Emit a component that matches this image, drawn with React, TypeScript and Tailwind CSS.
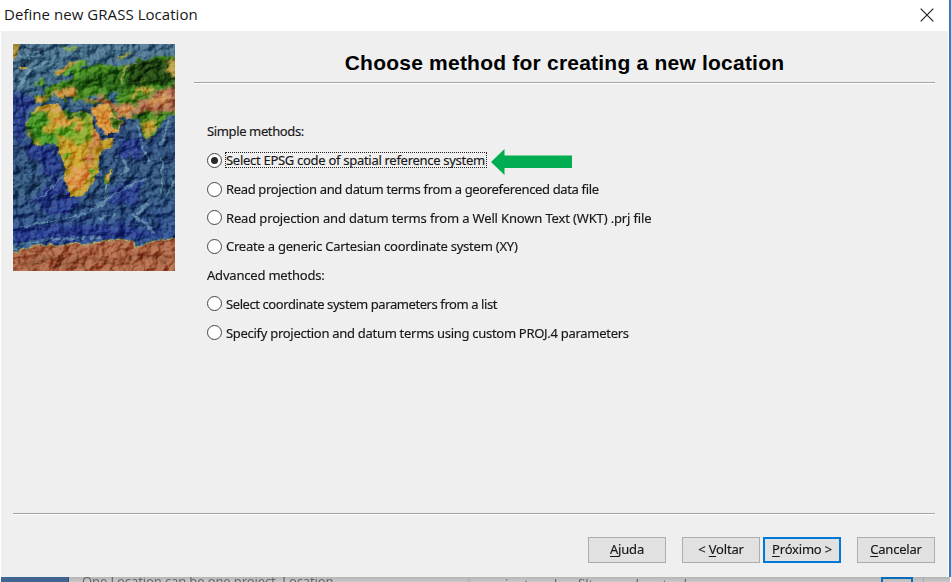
import React from 'react';

type Method = { label: string; selected?: boolean; track: string };

const SIMPLE: Method[] = [
  { label: 'Select EPSG code of spatial reference system', selected: true, track: 'tracking-[-0.29px]' },
  { label: 'Read projection and datum terms from a georeferenced data file', track: 'tracking-[-0.35px]' },
  { label: 'Read projection and datum terms from a Well Known Text (WKT) .prj file', track: 'tracking-[-0.15px]' },
  { label: 'Create a generic Cartesian coordinate system (XY)', track: 'tracking-[-0.23px]' },
];

const ADVANCED: Method[] = [
  { label: 'Select coordinate system parameters from a list', track: 'tracking-[-0.42px]' },
  { label: 'Specify projection and datum terms using custom PROJ.4 parameters', track: 'tracking-[-0.29px]' },
];

function WorldMap() {
  return (
    <svg className="block h-[227px] w-[162px] shrink-0" viewBox="39 27 485 681" preserveAspectRatio="none">
      <defs>
        <linearGradient id="sea" x1="0" y1="0" x2="0" y2="1">
          <stop offset="0" stopColor="#4d7590" />
          <stop offset="0.22" stopColor="#416a88" />
          <stop offset="0.4" stopColor="#31517f" />
          <stop offset="0.65" stopColor="#33587f" />
          <stop offset="0.85" stopColor="#2c4c8c" />
          <stop offset="1" stopColor="#4a86a0" />
        </linearGradient>
        <filter id="relief" x="0" y="0" width="100%" height="100%" colorInterpolationFilters="sRGB">
          <feTurbulence type="fractalNoise" baseFrequency="0.03 0.035" numOctaves="4" seed="8" />
          <feColorMatrix values="0 0 0 0 0  0 0 0 0 0  0 0 0 0 0  1.2 0 0 0 -.1" />
          <feDiffuseLighting surfaceScale="16" diffuseConstant="0.68" lightingColor="#fff">
            <feDistantLight azimuth="215" elevation="48" />
          </feDiffuseLighting>
        </filter>
        <filter id="rough" x="-5%" y="-5%" width="110%" height="110%" colorInterpolationFilters="sRGB">
          <feTurbulence type="fractalNoise" baseFrequency="0.05" numOctaves="3" seed="3" />
          <feDisplacementMap in="SourceGraphic" scale="18" xChannelSelector="R" yChannelSelector="G" />
        </filter>
        <filter id="patches" x="-10%" y="-10%" width="120%" height="120%" colorInterpolationFilters="sRGB">
          <feTurbulence type="fractalNoise" baseFrequency="0.04" numOctaves="3" seed="11" />
          <feDisplacementMap in="SourceGraphic" scale="48" xChannelSelector="R" yChannelSelector="G" />
          <feGaussianBlur stdDeviation="3" />
        </filter>
        <clipPath id="africa">
          <path d="M110 212L150 208L177 207L188 226L215 230L240 225L270 234L276 256L291 290L306 313L346 308L330 332L294 366L298 392L294 412L275 445L262 470L240 484L215 488L201 462L190 430L196 400L184 370L177 350L180 338L150 325L110 333L87 305L77 280L82 255L96 230Z" />
        </clipPath>
        <clipPath id="eurasia">
          <path d="M107 207L105 181L135 180L130 165L155 148L180 142L215 132L232 104L252 102L282 88L340 88L370 94L402 86L408 68L430 78L470 64L540 60V240L502 242L482 265L460 300L440 318L427 290L418 255L390 250L350 247L328 230L312 207L275 205L250 204L248 193L235 188L228 207L210 186L190 178L204 202L188 197L168 178L148 184L138 200Z" />
        </clipPath>
      </defs>
      <rect x="39" y="27" width="485" height="681" fill="url(#sea)" />
      <g filter="url(#patches)" fill="#293b91" opacity=".8">
        <path d="M39 170L105 190L80 250L70 320L160 340L185 400L150 430L90 350L39 300Z" />
        <path d="M350 310L425 315L430 370L370 370Z" />
        <path d="M39 585L200 565L330 570L500 590L450 605L220 620L39 620Z" />
        <path d="M90 500L190 420L240 500L190 540Z" />
        <path d="M330 460L430 430L400 520L320 500Z" />
      </g>
      <g filter="url(#rough)" fill="none" stroke="#7aa9b9" strokeLinecap="round" opacity=".6">
        <path d="M132 82L85 110L52 158M108 70L60 62M160 70L112 96M39 136L70 128" strokeWidth="7" />
        <path d="M120 490L165 450L190 420M60 578L190 552L260 535L315 490L375 460L440 430" strokeWidth="5" />
        <path d="M366 365L380 400L355 430M318 450L315 500L290 520M485 365V475M520 440L500 480M415 270L425 330L445 375M505 260L480 330" strokeWidth="6" />
        <path d="M39 640L100 620L150 612L300 605M395 540L430 560L460 590M440 510L415 535M300 550L345 538" strokeWidth="9" />
      </g>
      <g filter="url(#rough)" fill="none" stroke="#15314b" strokeWidth="10" opacity=".7">
        <path d="M75 39L127 45L125 66L90 78L62 100L50 141" />
        <path d="M200 470L150 500M440 535L472 575M330 445L350 430" strokeWidth="5" />
      </g>
      <g filter="url(#rough)">
        <g clipPath="url(#eurasia)">
          <rect x="39" y="27" width="510" height="310" fill="#478c20" />
          <g filter="url(#patches)">
            <path d="M190 145L300 105L370 95L430 70L540 65V145L440 150L360 170L280 155L220 170Z" fill="#2d6a19" />
            <path d="M385 85L440 75L540 72V132L420 155L380 135Z" fill="#234a13" />
            <path d="M148 177L210 160L240 176L220 190L160 185Z" fill="#ce9442" />
            <path d="M107 183L140 187L130 207L105 204Z" fill="#cc983f" />
            <path d="M250 200L290 180L340 202L400 210L420 190L460 180L540 138V235L430 232L395 252L350 245L310 206Z" fill="#b17152" />
            <path d="M395 160L455 155L470 167L405 178Z" fill="#d2aa45" />
            <path d="M496 75L540 70V125L495 115Z" fill="#bd9e42" />
            <path d="M350 215L400 215L393 248L360 245ZM425 200L500 180L520 195L455 206Z" fill="#d49853" />
            <path d="M420 262L480 258L450 300L435 315Z" fill="#c3a337" />
            <path d="M405 235L450 240L430 260L410 257Z" fill="#29651a" />
          </g>
          <path d="M365 150L371 100L402 83" fill="none" stroke="#a8a44a" strokeWidth="5" />
          <path d="M322 168L350 165L349 190L355 205L334 207L324 190ZM256 184L285 180L302 190L276 194Z" fill="#44788e" />
        </g>
        <path d="M160 119L182 100L214 80L246 73L268 84L242 94L239 118L220 123L217 104L198 125L184 113L173 127Z" fill="#559d28" />
        <path d="M162 117L186 98L214 82L244 77L205 96L176 122Z" fill="#c9994f" />
        <path d="M346 75L366 58L402 52L375 64L361 75Z" fill="#98a044" />
        <path d="M120 123L130 131L133 150L118 154ZM105 139L117 139L114 151L104 151Z" fill="#54972e" />
        <path d="M25 20L62 20L54 58L38 80L25 82Z" fill="#ad913c" />
        <path d="M55 93L80 93L84 102L62 104Z" fill="#ccaa4c" />
        <path d="M185 38L238 32L227 43L205 49Z" fill="#729b49" />
        <path d="M275 216L320 208L339 240L372 262L352 287L311 302L294 270L276 240Z" fill="#db9c43" />
        <path d="M335 246L370 260L348 283L335 276Z" fill="#447c22" />
        <g clipPath="url(#africa)">
          <rect x="70" y="200" width="290" height="300" fill="#c2a22e" />
          <g filter="url(#patches)">
            <path d="M75 240L115 230L142 242L130 282L155 292L180 330L90 330Z" fill="#499927" />
            <path d="M80 270L95 285L104 315L82 310Z" fill="#1d531a" />
            <path d="M190 220L270 232L267 250L200 251Z" fill="#277123" />
            <path d="M180 275L208 268L240 291L212 322L165 295Z" fill="#6bac2b" />
            <path d="M98 230L180 210L190 226L135 240Z" fill="#d19b50" />
            <path d="M190 240L221 254L204 280L168 275L148 263Z" fill="#d7a044" />
            <path d="M223 265L250 265L257 286L227 285Z" fill="#cca14c" />
            <path d="M240 240L258 260L252 286L232 300L218 326L235 330L265 310L280 285L268 250Z" fill="#88aa2c" />
            <path d="M269 290L305 300L300 331L280 350L279 380L253 376L259 342L276 330Z" fill="#c67d4a" />
            <path d="M190 335L245 325L258 360L232 388L189 380Z" fill="#cfa42b" />
            <path d="M201 404L262 384L287 399L251 465L225 472L201 445Z" fill="#dd994c" />
            <path d="M272 410L298 390L285 438L268 445ZM185 360L220 352L215 370L190 375Z" fill="#5bae23" />
          </g>
        </g>
        <path d="M314 421L333 401L332 428L319 448L312 442Z" fill="#6ba52c" />
        <path d="M317 421L333 403L329 429L319 444Z" fill="#dc9643" />
        <path d="M15 652L66 645L103 632L164 630L275 626L350 612L403 618L408 638L440 622L482 614L550 611V735H15Z" fill="#ae6847" stroke="#b0b85e" strokeWidth="3" />
      </g>
      <g filter="url(#patches)" fill="none" stroke="#774126" strokeWidth="9" opacity=".65">
        <path d="M60 692L130 665L210 674L280 668L340 685M380 670L440 660L500 675M160 690L260 695" />
      </g>
      <rect x="39" y="27" width="485" height="681" filter="url(#relief)" className="mix-blend-soft-light" />
    </svg>
  );
}

function Radio({ method }: { method: Method }) {
  return (
    <label className="flex h-[28.7px] items-center">
      <span className="flex size-[15px] shrink-0 items-center justify-center rounded-full border-[1.4px] border-[#444] bg-white">
        {method.selected && <span className="size-[7.5px] rounded-full bg-[#292929]" />}
      </span>
      <span className={`ml-[3px] whitespace-nowrap border border-dotted leading-[14px] ${method.selected ? 'border-[#222] pr-px' : 'border-transparent'} ${method.track}`}>
        {method.label}
      </span>
      {method.selected && (
        <svg className="ml-[4px] mt-[3px] h-[26px] w-[82px] shrink-0" viewBox="0 0 82 26">
          <path d="M0 13L13.5 0V6.5H81V19H13.5V26Z" fill="#00ad50" />
        </svg>
      )}
    </label>
  );
}

function Button({ before = '', hot, after, primary, className = '' }: { before?: string; hot: string; after: string; primary?: boolean; className?: string }) {
  return (
    <button className={`flex h-[26px] w-[78px] items-center justify-center whitespace-pre bg-[#e1e1e1] text-[13px] tracking-[-0.2px] ${primary ? 'border-2 border-[#0078d7]' : 'border border-[#adadad]'} ${className}`}>
      <span>{before}<span className="underline decoration-1 underline-offset-2">{hot}</span>{after}</span>
    </button>
  );
}

export default function App() {
  return (
    <div className="flex h-[582px] w-[951px] flex-col overflow-hidden bg-white font-['Noto_Sans','Open_Sans',sans-serif] text-[13px] text-[#171717]">
      <div className="flex h-[577px] shrink-0 flex-col border-r-2 border-[#2c80c5]">
        <header className="flex h-[31px] items-center justify-between pl-1 pr-[15px] font-['Open_Sans',sans-serif] text-[15px]">
          <span className="-mt-[3px] tracking-[0.05px]">Define new GRASS Location</span>
          <svg className="-mt-0.5 size-[14px]" viewBox="0 0 14 14" fill="none" stroke="#222" strokeWidth="1.2">
            <path d="M.7.7L13.3 13.3M13.3.7L.7 13.3" />
          </svg>
        </header>
        <main className="mx-px flex grow flex-col bg-[#efefef]">
          <div className="flex h-[482px] pl-3 pr-[13px] pt-[13px]">
            <WorldMap />
            <section className="ml-[19px] grow">
              <h1 className="h-[38px] pt-[5px] text-center font-['Liberation_Sans',Arial,sans-serif] text-[21px] font-bold leading-[28px] tracking-[0.22px] text-black">
                Choose method for creating a new location
              </h1>
              <div className="h-[2px] border-b border-white bg-[#a3a3a3]" />
              <div className="pl-[13px] pt-[33.4px] [-webkit-text-stroke:0.15px]">
                <div className="h-[28.7px] leading-[28.7px] tracking-[-0.37px]">Simple methods:</div>
                {SIMPLE.map((m) => <Radio key={m.label} method={m} />)}
                <div className="h-[28.7px] leading-[28.7px] tracking-[-0.2px]">Advanced methods:</div>
                {ADVANCED.map((m) => <Radio key={m.label} method={m} />)}
              </div>
            </section>
          </div>
          <div className="ml-3 mr-[13px] h-[2px] shrink-0 border-b border-white bg-[#a3a3a3]" />
          <footer className="flex justify-end pr-[13px] pt-[22px] [-webkit-text-stroke:0.15px]">
            <Button hot="A" after="juda" />
            <Button before="< " hot="V" after="oltar" className="ml-[16px]" />
            <Button hot="P" after="róximo >" primary className="ml-[3px]" />
            <Button hot="C" after="ancelar" className="ml-[16px]" />
          </footer>
        </main>
      </div>
      <div className="mx-px flex h-[5px] overflow-hidden bg-linear-to-b from-[#b5b5b5] to-[#c9c9c9] text-[13px] leading-[13px] text-[#666]">
        <div className="w-[68px] shrink-0 border-r border-[#294f7a] bg-[#416591]" />
        <div className="w-[402px] shrink-0 border-r-4 border-[#b8b8b8] pl-[13px]">
          <span className="-mt-[2px] block tracking-[-0.12px]">One Location can be one project. Location</span>
        </div>
        <div className="w-[410px] shrink-0 pl-[34px]">
          <span className="mt-px block">is stored as filters and vector layers</span>
        </div>
        <div className="h-6 w-8 shrink-0 border-2 border-[#0b6cb9]" />
        <div className="ml-[10px] grow border-l border-[#aaa]" />
      </div>
    </div>
  );
}
